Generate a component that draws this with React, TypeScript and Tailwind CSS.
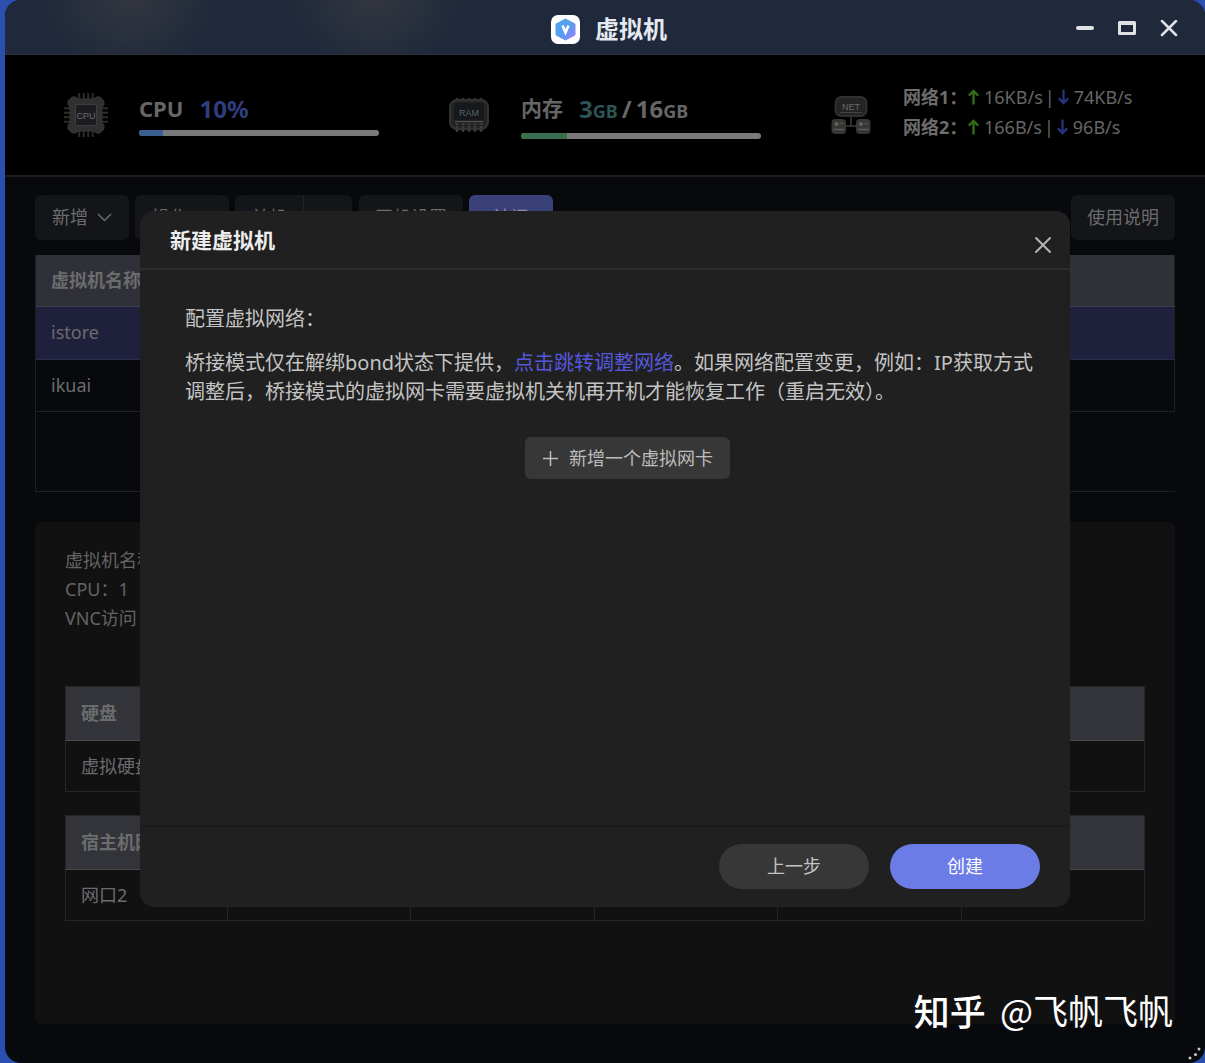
import React from "react";

function AppLogo() {
  return (
    <span className="flex size-[29px] items-center justify-center rounded-[7px] bg-white">
      <svg width="21" height="23" viewBox="0 0 21 23" aria-hidden="true">
        <defs>
          <linearGradient id="hex" x1="0" y1="0" x2="1" y2="1">
            <stop offset="0" stopColor="#4aa8ea" />
            <stop offset="0.55" stopColor="#5b9bf3" />
            <stop offset="1" stopColor="#a57cf6" />
          </linearGradient>
        </defs>
        <path d="M10.5 1 20 6v11l-9.500 5L1 17V6z" fill="url(#hex)" strokeLinejoin="round" stroke="url(#hex)" />
        <path d="M7.500 7.500 10.500 14.500 13.500 7.500" fill="none" stroke="#fff" strokeWidth="2.600" />
      </svg>
    </span>
  );
}

function CpuIcon() {
  const pins = [15, 19.5, 24, 28.5];
  return (
    <svg width="46" height="46" viewBox="0 0 46 46" aria-hidden="true">
      <g stroke="#2c2c2c" strokeWidth="2">
        {pins.map((p) => (
          <path key={p} d={`M${p + 1.2} 1v6M${p + 1.2} 39v6M1 ${p + 1.2}h6M39 ${p + 1.2}h6`} />
        ))}
      </g>
      <path
        d="M9 5h4l2 2h16l2-2h4l4 4v4l-2 2v16l2 2v4l-4 4h-4l-2-2H15l-2 2H9l-4-4v-4l2-2V15l-2-2V9z"
        fill="#303030"
        stroke="#343434"
        strokeLinejoin="round"
      />
      <rect x="12.500" y="12.500" width="21" height="21" rx="1.500" fill="#1b1c1f" stroke="#3e3e3e" />
      <text x="23" y="26.500" textAnchor="middle" fontSize="9" fontFamily="Liberation Sans, sans-serif" fill="#6a6d75">
        CPU
      </text>
    </svg>
  );
}

function RamIcon() {
  const pins = [8, 14, 20, 26, 32];
  return (
    <svg width="40" height="36" viewBox="0 0 40 36" aria-hidden="true">
      <g stroke="#343434" strokeWidth="2.500">
        {pins.map((p) => (
          <path key={p} d={`M${p} 1v4M${p} 27v8`} />
        ))}
      </g>
      <rect x="1" y="3" width="38" height="29" rx="7" fill="#242426" stroke="#323232" strokeWidth="2" />
      <rect x="5" y="6" width="30" height="17" rx="3" fill="#17181b" />
      <path d="M6 24.500h28" stroke="#505050" />
      <g stroke="#3c3c3c" strokeWidth="2.500" strokeDasharray="2 1">
        {pins.map((p) => (
          <path key={p} d={`M${p} 26v9`} />
        ))}
      </g>
      <text x="20" y="18.500" textAnchor="middle" fontSize="9" fontFamily="Liberation Sans, sans-serif" fill="#54656e">
        RAM
      </text>
    </svg>
  );
}

function NetIcon() {
  return (
    <svg width="40" height="38" viewBox="0 0 40 38" aria-hidden="true">
      <path d="M20 20v10M14 30h12" stroke="#3c3c3c" strokeWidth="1.500" />
      <rect x="4.500" y="1" width="31" height="19" rx="6" fill="#242424" stroke="#303030" strokeWidth="2" />
      <path d="M9 16.500h22" stroke="#444" />
      <text x="20" y="14" textAnchor="middle" fontSize="9" fontFamily="Liberation Sans, sans-serif" fill="#6a6a6a">
        NET
      </text>
      {[0.5, 25].map((x) => (
        <g key={x}>
          <rect x={x} y="23" width="14.500" height="15" rx="4" fill="#363634" />
          <circle cx={x + 5} cy="28" r="2" fill="#62625e" />
          <path d={`M${x + 8} 27.500h4`} stroke="#4c4c48" strokeWidth="1.500" />
          <path d={`M${x + 2} 33.500h10.500`} stroke="#5c5c58" strokeWidth="1.500" />
        </g>
      ))}
    </svg>
  );
}

function Arrow({ down }: { down?: boolean }) {
  return (
    <svg
      width="13"
      height="18"
      viewBox="0 0 14 18"
      fill="none"
      strokeWidth="2.500"
      className={down ? "stroke-[#26337c]" : "stroke-[#366d14]"}
      aria-hidden="true"
    >
      <path d={down ? "M7 1v15M2 10.500 7 15.500l5-5" : "M7 17V2M2 7.500 7 2.500l5 5"} />
    </svg>
  );
}

function Chevron() {
  return (
    <svg width="15" height="9" viewBox="0 0 15 9" fill="none" stroke="#6b6c6e" strokeWidth="1.500" aria-hidden="true">
      <path d="M1 1l6.500 6.500L14 1" />
    </svg>
  );
}

function NetRow({ name, up, down }: { name: string; up: string; down: string }) {
  return (
    <div className="flex h-[30px] items-center text-[18px]">
      <span className="w-16 font-bold whitespace-nowrap text-[#6c6c6c]">{name}：</span>
      <Arrow />
      <span className="ml-1">{up}</span>
      <span className="mx-[2px]">|</span>
      <Arrow down />
      <span className="ml-1">{down}</span>
    </div>
  );
}

function Meter({ label, value, className }: { label: string; value: number; className: string }) {
  return (
    <div
      role="progressbar"
      aria-label={label}
      aria-valuenow={value}
      className="h-[6px] w-[240px] overflow-hidden rounded-full bg-[#7a7a7c]"
    >
      <div className={className} style={{ width: `${value}%` }} />
    </div>
  );
}

const toolButton =
  "flex h-[45px] items-center justify-center gap-[9px] rounded-[6px] bg-[#141518] text-[18px] text-[#6b6c6e]";

function DetailTable({ title, first, columns }: { title: string; first: string; columns: number }) {
  const rest = Array.from({ length: columns - 1 }, (_, i) => i);
  return (
    <table className="w-full table-fixed border-collapse border border-[#252527] text-left">
      <thead>
        <tr className="h-[54px] border-b border-[#4a4a4d] bg-[#33343a]">
          <th scope="col" className="w-[15%] px-[15px] font-bold whitespace-nowrap">
            {title}
          </th>
          {rest.map((i) => (
            <td key={i} />
          ))}
        </tr>
      </thead>
      <tbody>
        <tr className="h-[51px]">
          <td className="border-r border-[#252527] px-[15px] whitespace-nowrap">{first}</td>
          {rest.map((i) => (
            <td key={i} className="border-r border-[#252527]" />
          ))}
        </tr>
      </tbody>
    </table>
  );
}

function TitleBar() {
  return (
    <header className="grid h-[55px] shrink-0 grid-cols-[1fr_auto_1fr] items-center border-b border-[#2a303c] bg-[#1f293b] bg-[radial-gradient(90px_70px_at_125px_0px,#33363f,transparent),radial-gradient(90px_70px_at_370px_0px,#33363f,transparent)] pt-[4px]">
      <span />
      <div className="flex items-center gap-[15px] pl-2">
        <AppLogo />
        <h1 className="text-[24px] leading-[30px] font-bold text-[#e4e8f0]">虚拟机</h1>
      </div>
      <div className="flex items-center justify-end gap-[24px] pr-[27px]">
        <button aria-label="最小化">
          <svg width="18" height="18" viewBox="0 0 18 18" stroke="#dfe1e6" strokeWidth="4" strokeLinecap="round">
            <path d="M2 8h14" />
          </svg>
        </button>
        <button aria-label="最大化">
          <svg width="18" height="18" viewBox="0 0 18 18" fill="none" stroke="#dfe1e6" strokeWidth="3">
            <path d="M1.500 2.500h15v11h-15z" strokeLinejoin="round" />
            <path d="M1 3h16" strokeWidth="4" />
          </svg>
        </button>
        <button aria-label="关闭窗口">
          <svg width="18" height="18" viewBox="0 0 18 18" stroke="#dfe1e6" strokeWidth="2.500" strokeLinecap="round">
            <path d="M2 1l14 14M16 1 2 15" />
          </svg>
        </button>
      </div>
    </header>
  );
}

function Stats() {
  return (
    <section className="flex h-[122px] shrink-0 items-center justify-between border-b-2 border-[#1e1e1f] bg-black pr-[64px] pl-[58px] text-[#666]">
      <div className="flex items-center">
        <CpuIcon />
        <div className="ml-[30px] flex flex-col gap-[7px]">
          <div className="flex h-[29px] items-center gap-[16px] font-bold">
            <span className="text-[22px]">CPU</span>
            <span className="text-[24px] text-[#303d7c]">10%</span>
          </div>
          <Meter label="CPU" value={10} className="h-full bg-[#3a5f8f]" />
        </div>
      </div>
      <div className="flex items-center">
        <RamIcon />
        <div className="ml-[32px] flex flex-col gap-[10px] pt-[4px]">
          <div className="flex h-[28px] items-center gap-[16px] font-bold whitespace-nowrap">
            <span className="text-[21px]">内存</span>
            <span className="text-[24px]">
              <span className="text-[#2d5456]">
                3<span className="text-[18px]">GB</span>
              </span>
              <span className="mx-[4px]">/</span>16<span className="text-[18px]">GB</span>
            </span>
          </div>
          <Meter label="内存" value={19} className="h-full bg-[#3a6f50]" />
        </div>
      </div>
      <div className="flex items-center">
        <NetIcon />
        <div className="mb-[6px] ml-[32px] w-[238px] whitespace-nowrap">
          <NetRow name="网络1" up="16KB/s" down="74KB/s" />
          <NetRow name="网络2" up="166B/s" down="96B/s" />
        </div>
      </div>
    </section>
  );
}

function CreateDialog() {
  return (
    <div
      role="dialog"
      aria-labelledby="dialog-title"
      className="flex w-[930px] max-w-full flex-col rounded-[14px] bg-[#202020] text-[#c4c4c4]"
    >
      <div className="flex h-[59px] items-center justify-between border-b-2 border-[#2c2c2c] pt-[2px] pr-[18px] pl-[30px]">
        <h2 id="dialog-title" className="text-[21px] font-bold text-[#ededed]">
          新建虚拟机
        </h2>
        <button aria-label="关闭" className="mt-[8px]">
          <svg width="18" height="18" viewBox="0 0 18 18" stroke="#b4b4b4" strokeWidth="2" strokeLinecap="round">
            <path d="M2 2l14 14M16 2 2 16" />
          </svg>
        </button>
      </div>
      <div className="min-h-[555px] pt-[34px] pl-[45px] text-[20px] leading-[29px]">
        <p>配置虚拟网络：</p>
        <p className="mt-[15px] mr-[24px]">
          桥接模式仅在解绑bond状态下提供，
          <a href="#network" className="text-[#5558dc]">
            点击跳转调整网络
          </a>
          。如果网络配置变更，例如：IP获取方式调整后，桥接模式的虚拟网卡需要虚拟机关机再开机才能恢复工作（重启无效）。
        </p>
        <hr className="mt-[14px] mr-[45px] border-[#1d1d1d]" />
        <button className="mx-auto mt-[16px] flex h-[42px] items-center gap-[10px] rounded-[6px] bg-[#373737] px-[17px] text-[18px] text-[#bdbdbd]">
          <svg width="17" height="17" viewBox="0 0 17 17" stroke="#bdbdbd" strokeWidth="1.500" aria-hidden="true">
            <path d="M8.500 1v15M1 8.500h15" />
          </svg>
          新增一个虚拟网卡
        </button>
      </div>
      <div className="flex h-[82px] items-center justify-end gap-[21px] border-t-2 border-[#1c1c1c] pr-[30px] pb-[1px]">
        <button className="h-[45px] w-[150px] rounded-full bg-[#373737] text-[18px]">上一步</button>
        <button className="h-[45px] w-[150px] rounded-full bg-[#6b7ce6] text-[18px] text-white">创建</button>
      </div>
    </div>
  );
}

export default function App() {
  return (
    <div className="flex min-h-screen bg-[#2b4fae] pl-[5px] font-['Noto_Sans','Noto_Sans_CJK_SC',sans-serif]">
      <div className="relative flex w-full flex-col overflow-hidden rounded-[16px] bg-[#08090d]">
        <TitleBar />
        <div className="relative flex grow flex-col">
          <Stats />
          <main className="flex grow flex-col px-[30px] pt-[18px] pb-[39px] text-[18px] text-[#6b6c6e]">
            <div className="flex gap-[6px]">
              <button className={`${toolButton} px-[17px]`}>
                新增
                <Chevron />
              </button>
              <button className={`${toolButton} px-[17px]`}>
                操作
                <Chevron />
              </button>
              <div className="mr-[1px] flex">
                <button className="h-[45px] rounded-l-[6px] border-r border-[#222326] bg-[#141518] px-[16px]">
                  关机
                </button>
                <button
                  aria-label="更多关机选项"
                  className="flex h-[45px] w-[48px] items-center justify-center rounded-r-[6px] bg-[#141518]"
                >
                  <Chevron />
                </button>
              </div>
              <button className={`${toolButton} px-[16px]`}>开机设置</button>
              <button className="h-[45px] w-[84px] rounded-[6px] bg-[#3a4179] text-[#8a8ca8]">访问</button>
              <button className={`${toolButton} ml-auto px-[16px]`}>使用说明</button>
            </div>

            <div className="mt-[15px] h-[237px] border-b border-l border-[#1f2023]">
              <table className="w-full border-collapse border-r border-[#1f2023] text-left">
                <thead>
                  <tr className="h-[51px] border-b border-[#3b3d48] bg-[#303038]">
                    <th scope="col" className="px-[15px] font-bold">
                      虚拟机名称
                    </th>
                  </tr>
                </thead>
                <tbody>
                  <tr className="h-[53px] border-b border-[#2a2c4a] bg-[#1f203c]">
                    <td className="px-[15px]">istore</td>
                  </tr>
                  <tr className="h-[52px] border-b border-[#1f2023]">
                    <td className="px-[15px]">ikuai</td>
                  </tr>
                </tbody>
              </table>
            </div>

            <section className="mt-[30px] grow rounded-[6px] bg-[#111111] px-[30px] pt-[24px]">
              <div className="leading-[29px] text-[#646464]">
                <p>虚拟机名称：istore</p>
                <p>CPU：1</p>
                <p>VNC访问</p>
              </div>
              <div className="mt-[53px] flex flex-col gap-[23px]">
                <DetailTable title="硬盘" first="虚拟硬盘" columns={2} />
                <DetailTable title="宿主机网口" first="网口2" columns={6} />
              </div>
            </section>
          </main>

          <div className="absolute inset-0 flex items-center justify-center">
            <CreateDialog />
          </div>
        </div>

        <div className="absolute right-[32px] bottom-[29px] flex items-center gap-[14px] font-['Noto_Sans_CJK_SC',sans-serif] leading-[48px] whitespace-nowrap text-white">
          <span className="text-[36px] font-medium">知乎</span>
          <span className="text-[35px]">@飞帆飞帆</span>
        </div>
        <svg className="absolute right-[3px] bottom-[3px]" width="14" height="14" viewBox="0 0 14 14" fill="#c8c8cc" aria-hidden="true">
          <circle cx="2" cy="12" r="1.500" />
          <circle cx="7.500" cy="8.500" r="1.500" />
          <circle cx="11" cy="3" r="1.500" />
        </svg>
      </div>
    </div>
  );
}
